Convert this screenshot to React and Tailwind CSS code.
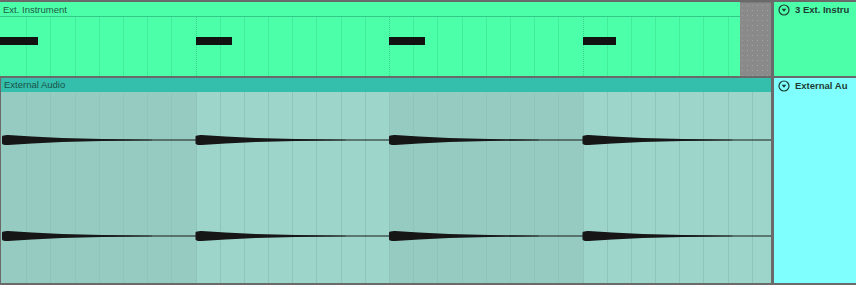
import React from "react";

const COLS = Array.from({ length: 32 }, (_, i) => i);
const BEATS = [0, 1, 2, 3];

function Grid({ line, barLine }) {
  return (
    <div className="absolute inset-0 flex">
      {COLS.map((i) => (
        <div
          key={i}
          className={`flex-1 border-l ${i % 8 === 0 ? barLine : line} ${i === 0 ? "border-transparent" : ""}`}
        />
      ))}
    </div>
  );
}

function Icon() {
  return (
    <svg width="12" height="12" viewBox="0 0 12 12" className="shrink-0">
      <circle cx="6" cy="6" r="5" fill="none" stroke="#1e3b33" strokeWidth="1.2" />
      <path d="M3.6 4.8 L8.4 4.8 L6 7.8 Z" fill="#1e3b33" />
    </svg>
  );
}

function Wave() {
  const seg = 774 / 4;
  return (
    <svg width="774" height="20" viewBox="0 0 774 20" className="block">
      <line x1="0" y1="10" x2="774" y2="10" stroke="#1a1a1a" strokeWidth="1.2" />
      {BEATS.map((b) => {
        const x = b * seg;
        return (
          <path
            key={b}
            d={`M${x} 6.4 Q${x + 1} 4.7 ${x + 6} 4.9 L${x + 30} 6.4 L${x + 60} 8 L${x + 100} 9.1 L${x + 150} 9.8 L${x + 150} 10.2 L${x + 100} 10.9 L${x + 60} 12 L${x + 30} 13.6 L${x + 6} 15.1 Q${x + 1} 15.3 ${x} 13.6 Z`}
            fill="#161616"
          />
        );
      })}
    </svg>
  );
}

export default function App() {
  return (
    <div
      className="w-[856px] h-[285px] bg-[#6a6a6a] flex flex-col gap-[2px] py-[2px] overflow-hidden"
      style={{ fontFamily: '"Liberation Sans", Arial, sans-serif' }}
    >
      {/* Top track */}
      <div className="flex h-[74px] gap-[3px]">
        <div className="w-[771px] flex">
          <div className="w-[740px] flex flex-col bg-[#4cffa9]">
            <div className="h-[15px] border-b border-[#35c987] flex items-center pl-[3px] pt-[1px] text-[9.5px] leading-none text-[#205a47]">
              Ext. Instrument
            </div>
            <div className="relative flex-1 overflow-hidden">
              <div className="absolute inset-y-0 left-[2px] w-[774px]">
                <Grid line="border-[#43ec9c]" barLine="border-[#3ad58c] border-dotted" />
                <div className="absolute inset-x-0 top-[20px] flex">
                  {BEATS.map((b) => (
                    <div key={b} className="flex-1">
                      <div className={`h-[8px] bg-[#121212] ${b === 3 ? "w-[33px]" : "w-[36px]"}`} />
                    </div>
                  ))}
                </div>
                <div className="absolute top-[20px] -left-[2px] w-[2px] h-[8px] bg-[#121212]" />
              </div>
            </div>
          </div>
          <div className="flex-1 bg-[#8a8a8a] bg-[radial-gradient(circle,#a3a3a3_0.6px,transparent_0.9px)] bg-[length:5px_5px] border-t border-[#7a7a7a]" />
        </div>
        <div className="flex-1 bg-[#4cffa9] flex items-start gap-[5px] pl-[4px] pt-[2px]">
          <Icon />
          <span className="text-[9.5px] font-bold leading-[12px] text-[#1e3b33] whitespace-nowrap">3 Ext. Instru</span>
        </div>
      </div>

      {/* Bottom track */}
      <div className="flex flex-1 gap-[3px]">
        <div className="w-[771px] flex flex-col pl-[1px]">
          <div className="h-[14px] bg-[#33bfab] flex items-center pl-[3px] text-[9.5px] leading-none text-[#1a5249]">
            External Audio
          </div>
          <div className="relative flex-1 bg-[#97cdc4] overflow-hidden">
            <div className="absolute inset-y-0 left-[1px] w-[774px]">
              <div className="absolute inset-0 flex">
                <div className="flex-1 bg-[#95cbc1]" />
                <div className="flex-1 bg-[#9dd5cb]" />
                <div className="flex-1 bg-[#95cbc1]" />
                <div className="flex-1 bg-[#9dd5cb]" />
              </div>
              <Grid line="border-[#8ec4ba]" barLine="border-[#8ec4ba]" />
              <div className="absolute inset-0 flex flex-col">
                <div className="mt-[38px]">
                  <Wave />
                </div>
                <div className="mt-[76px]">
                  <Wave />
                </div>
              </div>
            </div>
            <div className="absolute left-0 top-0 bottom-0 w-[1px] bg-[#95cbc1]" />
          </div>
        </div>
        <div className="flex-1 bg-[#80ffff] flex items-start gap-[5px] pl-[4px] pt-[2px]">
          <Icon />
          <span className="text-[9.5px] font-bold leading-[12px] text-[#1e3b33] whitespace-nowrap">External Au</span>
        </div>
      </div>
    </div>
  );
}
